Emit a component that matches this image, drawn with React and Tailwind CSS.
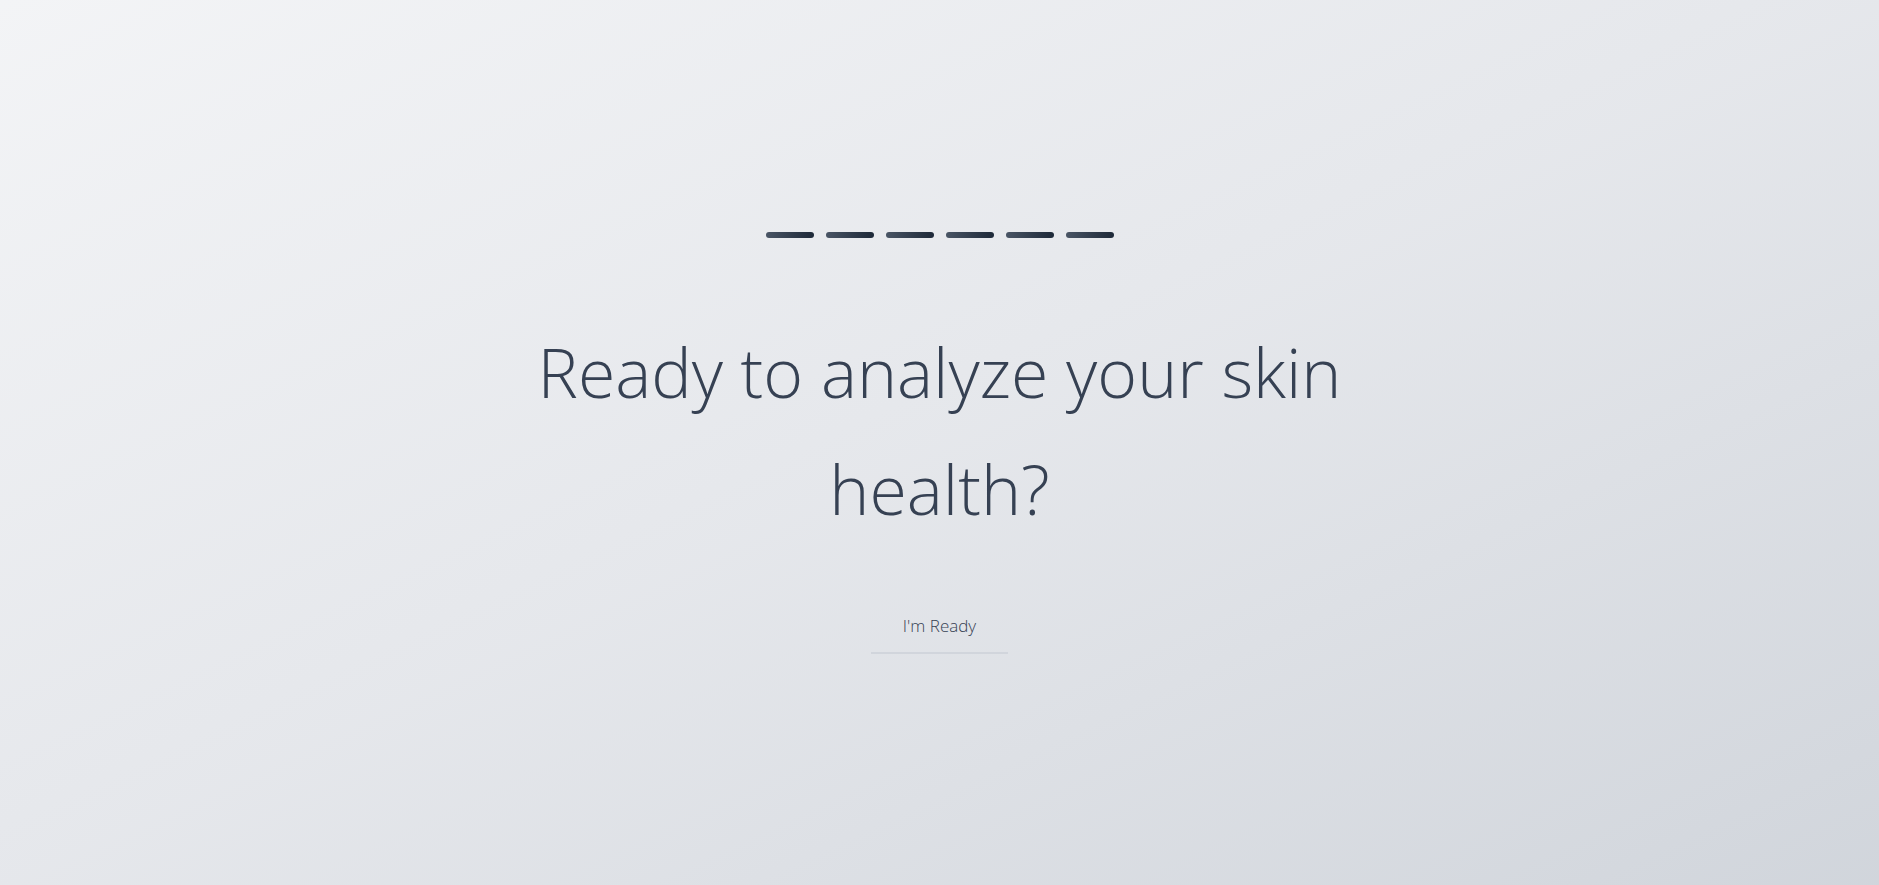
const STEPS = [1, 2, 3, 4, 5, 6];

export default function App() {
  return (
    <main className="flex min-h-screen flex-col items-center justify-center bg-linear-to-br from-gray-100 via-gray-200 to-gray-300 px-6 font-['Open_Sans','Noto_Sans',sans-serif] font-light">
      <div className="flex gap-3">
        {STEPS.map((step) => (
          <span
            key={step}
            className="h-1.5 w-12 rounded-full bg-linear-to-r from-gray-600 to-gray-800"
          />
        ))}
      </div>
      <h1 className="mt-[75px] max-w-4xl text-center text-[68px] leading-[117px] text-gray-700">
        Ready to analyze your skin health?
      </h1>
      <button
        type="button"
        className="mt-[53px] border-b-2 border-gray-300 px-8 py-3 text-[17px] leading-7 text-gray-700"
      >
        I'm Ready
      </button>
    </main>
  );
}
